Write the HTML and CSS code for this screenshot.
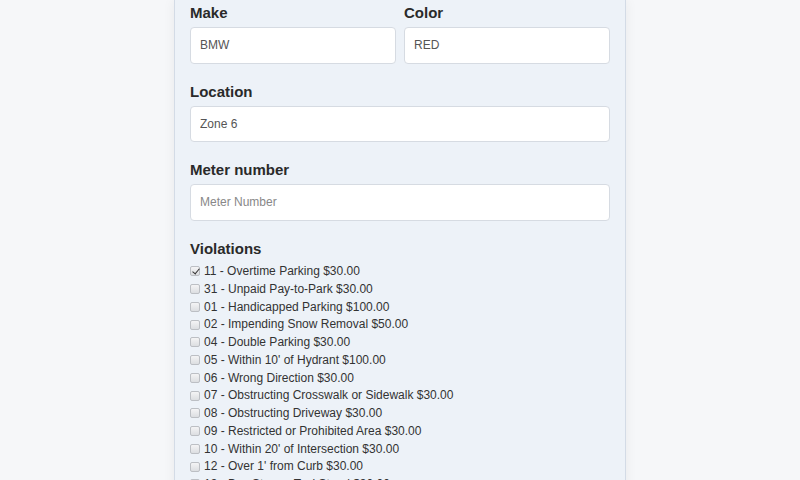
FILE: index.html
```html
<!DOCTYPE html>
<html>
<head>
<meta charset="utf-8">
<link rel="stylesheet" href="styles.css">
</head>
<body>
<div class="panel">
  <div class="row">
    <div class="group">
      <label class="lbl">Make</label>
      <input class="field" type="text" value="BMW">
    </div>
    <div class="group">
      <label class="lbl">Color</label>
      <input class="field" type="text" value="RED">
    </div>
  </div>
  <div class="group">
    <label class="lbl">Location</label>
    <input class="field" type="text" value="Zone 6">
  </div>
  <div class="group">
    <label class="lbl">Meter number</label>
    <input class="field" type="text" placeholder="Meter Number">
  </div>
  <div class="group">
    <label class="lbl vlbl">Violations</label>
    <ul class="violations">
      <li><input type="checkbox" class="cb" checked><span>11 - Overtime Parking $30.00</span></li>
      <li><input type="checkbox" class="cb"><span>31 - Unpaid Pay-to-Park $30.00</span></li>
      <li><input type="checkbox" class="cb"><span>01 - Handicapped Parking $100.00</span></li>
      <li><input type="checkbox" class="cb"><span>02 - Impending Snow Removal $50.00</span></li>
      <li><input type="checkbox" class="cb"><span>04 - Double Parking $30.00</span></li>
      <li><input type="checkbox" class="cb"><span>05 - Within 10' of Hydrant $100.00</span></li>
      <li><input type="checkbox" class="cb"><span>06 - Wrong Direction $30.00</span></li>
      <li><input type="checkbox" class="cb"><span>07 - Obstructing Crosswalk or Sidewalk $30.00</span></li>
      <li><input type="checkbox" class="cb"><span>08 - Obstructing Driveway $30.00</span></li>
      <li><input type="checkbox" class="cb"><span>09 - Restricted or Prohibited Area $30.00</span></li>
      <li><input type="checkbox" class="cb"><span>10 - Within 20' of Intersection $30.00</span></li>
      <li><input type="checkbox" class="cb"><span>12 - Over 1' from Curb $30.00</span></li>
      <li><input type="checkbox" class="cb"><span>13 - Bus Stop or Taxi Stand $30.00</span></li>
    </ul>
  </div>
</div>
</body>
</html>
```
FILE: styles.css
```css
html, body {
  margin: 0;
  padding: 0;
  background: #f6f7f9;
  font-family: "Liberation Sans", Arial, sans-serif;
  color: #333;
  overflow: hidden;
  height: 480px;
}
.panel {
  width: 420px;
  margin: 0 auto;
  padding: 4px 15px 20px;
  background: #edf2f8;
  border: 1px solid #d3dbe6;
  border-top: none;
  box-shadow: 0 0 12px rgba(0, 0, 0, 0.06);
  min-height: 600px;
}
.row {
  display: grid;
  grid-template-columns: 1fr 1fr;
  gap: 8px;
}
.group {
  display: flex;
  flex-direction: column;
  margin-bottom: 19px;
}
.lbl {
  font-size: 15px;
  font-weight: bold;
  line-height: 18px;
  margin-bottom: 5px;
  color: #2a2a2a;
}
.vlbl {
  margin-bottom: 5.5px;
}
.field {
  box-sizing: border-box;
  height: 36.5px;
  width: 100%;
  border: 1px solid #d6dbe2;
  border-radius: 4px;
  background: #fff;
  padding: 0 9px;
  font-family: "Liberation Sans", Arial, sans-serif;
  font-size: 12px;
  color: #555;
  outline: none;
}
.field::placeholder {
  color: #888;
}
.violations {
  list-style: none;
  margin: 0;
  padding: 0;
}
.violations li {
  display: flex;
  align-items: center;
  font-size: 12px;
  line-height: 17.75px;
  color: #333;
}
.cb {
  appearance: none;
  -webkit-appearance: none;
  box-sizing: border-box;
  width: 10px;
  height: 10px;
  margin: 0 4px 1px 0;
  border: 1px solid #bcbfc4;
  border-radius: 2px;
  background: linear-gradient(#f4f4f5, #dcdee1);
  position: relative;
  flex: none;
}
.cb:checked::after {
  content: "";
  position: absolute;
  left: 2.5px;
  top: 0px;
  width: 3px;
  height: 6px;
  border: solid #333;
  border-width: 0 1.5px 1.5px 0;
  transform: rotate(40deg);
}
```
